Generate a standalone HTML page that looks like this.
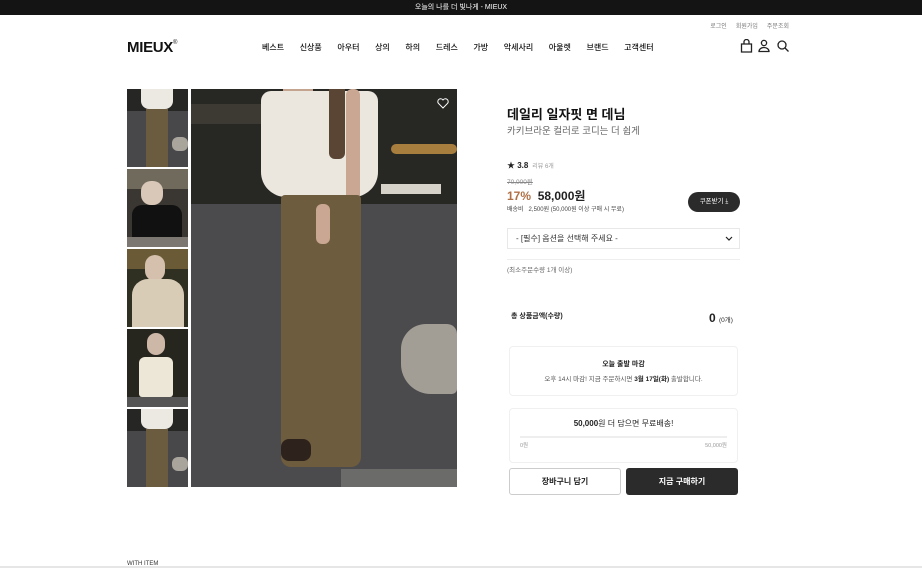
<!DOCTYPE html>
<html><head><meta charset="utf-8"><style>
*{margin:0;padding:0;box-sizing:border-box}
body{width:922px;height:568px;overflow:hidden;background:#fff;font-family:"Liberation Sans","Noto Sans CJK KR",sans-serif;color:#222;position:relative}
.a{position:absolute}
.top{left:0;top:0;width:922px;height:15px;background:#141414;color:#fff;font-size:7px;text-align:center;line-height:15px}
.util{top:21px;right:133px;font-size:6px;color:#777;word-spacing:0}
.util span{margin-left:9px}
.logo{left:127px;top:39px;font-size:15px;font-weight:bold;letter-spacing:-.3px;color:#111}
.logo sup{font-size:6px;font-weight:normal;vertical-align:top;position:relative;top:1px}
.nav{top:42px;left:262px;font-size:8px;color:#111;white-space:nowrap;font-weight:500}
.nav span{margin-right:15.6px}
.th{left:127px;width:61px;height:78px;overflow:hidden}
.th div,.m div{position:absolute}
.m{left:191px;top:89px;width:266px;height:398px;overflow:hidden;background:#4b4b4e}
</style></head><body>
<div class="a top">오늘의 나를 더 빛나게 - MIEUX</div>
<div class="a util"><span>로그인</span><span>회원가입</span><span>주문조회</span></div>
<div class="a logo">MIEUX<sup>®</sup></div>
<div class="a nav"><span>베스트</span><span>신상품</span><span>아우터</span><span>상의</span><span>하의</span><span>드레스</span><span>가방</span><span>악세사리</span><span>아울렛</span><span>브랜드</span><span>고객센터</span></div>
<svg class="a" style="left:740px;top:39px" width="52" height="14" viewBox="0 0 52 14" fill="none" stroke="#222" stroke-width="1.3"><path d="M1.5 5h10v8h-10z M4 5V3a2.5 2.5 0 0 1 5 0v2"/><circle cx="24" cy="4" r="2.6"/><path d="M19 12.5a5 4 0 0 1 10 0z"/><circle cx="42" cy="6" r="4"/><path d="M45 9l3.5 3.5"/></svg>

<div class="a th" style="top:89px;background:#48484b"><div style="left:0;top:0;width:61px;height:22px;background:#262624"></div><div style="left:14px;top:0;width:32px;height:20px;background:#ece9e2;border-radius:0 0 8px 8px"></div><div style="left:19px;top:20px;width:22px;height:58px;background:#6b5b3f"></div><div style="left:45px;top:48px;width:16px;height:14px;background:#a9a49c;border-radius:6px"></div></div>
<div class="a th" style="top:169px;background:#3a3631"><div style="left:0;top:0;width:61px;height:20px;background:#6f6a5c"></div><div style="left:14px;top:12px;width:22px;height:24px;background:#d9c7b8;border-radius:10px"></div><div style="left:5px;top:36px;width:50px;height:42px;background:#111;border-radius:10px 10px 0 0"></div><div style="left:0;top:68px;width:61px;height:10px;background:#7c7770"></div></div>
<div class="a th" style="top:249px;background:#2f2f22"><div style="left:0;top:0;width:61px;height:20px;background:#6a5a36"></div><div style="left:18px;top:6px;width:20px;height:26px;background:#d5c0ae;border-radius:10px"></div><div style="left:5px;top:30px;width:52px;height:48px;background:#d9ccb6;border-radius:16px 16px 0 0"></div></div>
<div class="a th" style="top:329px;background:#26261f"><div style="left:20px;top:4px;width:18px;height:22px;background:#cdb8a8;border-radius:9px"></div><div style="left:12px;top:28px;width:34px;height:40px;background:#ede7d8;border-radius:6px 6px 3px 3px"></div><div style="left:0;top:68px;width:61px;height:10px;background:#555"></div></div>
<div class="a th" style="top:409px;height:78px;background:#48484b"><div style="left:0;top:0;width:61px;height:22px;background:#262624"></div><div style="left:14px;top:0;width:32px;height:20px;background:#ece9e2;border-radius:0 0 8px 8px"></div><div style="left:19px;top:20px;width:22px;height:58px;background:#6b5b3f"></div><div style="left:45px;top:48px;width:16px;height:14px;background:#a9a49c;border-radius:6px"></div></div>

<div class="a m">
<div style="left:0;top:0;width:266px;height:115px;background:#272724"></div>
<div style="left:0;top:15px;width:90px;height:20px;background:#3d3a34"></div>
<div style="left:200px;top:55px;width:66px;height:10px;background:#a87e3f;border-radius:5px"></div>
<div style="left:190px;top:95px;width:60px;height:10px;background:#d6d2c9"></div>
<div style="left:210px;top:235px;width:56px;height:70px;background:#a39e95;border-radius:25px 10px 5px 30px"></div>
<div style="left:92px;top:0;width:30px;height:40px;background:#c4a48e"></div>
<div style="left:70px;top:2px;width:117px;height:106px;background:#ebe7df;border-radius:10px 10px 25px 25px"></div>
<div style="left:138px;top:0;width:16px;height:70px;background:#5a4534;border-radius:0 0 6px 6px"></div>
<div style="left:155px;top:0;width:14px;height:120px;background:#c9a792;border-radius:6px"></div>
<div style="left:90px;top:106px;width:80px;height:272px;background:#6e5c3e;border-radius:4px 4px 10px 10px"></div>
<div style="left:125px;top:115px;width:14px;height:40px;background:#c9a792;border-radius:6px"></div>
<div style="left:90px;top:350px;width:30px;height:22px;background:#2e231c;border-radius:8px"></div>
<div style="left:150px;top:380px;width:116px;height:18px;background:#6b6b6a"></div>
</div>
<svg class="a" style="left:437px;top:98px" width="12" height="11" viewBox="0 0 12 11" fill="none" stroke="#fff" stroke-width="1"><path d="M6 10L1.3 5.2A2.7 2.7 0 0 1 6 2a2.7 2.7 0 0 1 4.7 3.2z"/></svg>

<div class="a" style="left:507px;top:104px;font-size:13px;font-weight:bold;color:#111">데일리 일자핏 면 데님</div>
<div class="a" style="left:507px;top:123px;font-size:9.5px;color:#666">카키브라운 컬러로 코디는 더 쉽게</div>
<div class="a" style="left:507px;top:160px;font-size:8px;font-weight:bold">★ 3.8 <span style="font-weight:normal;font-size:6px;color:#999">&nbsp;리뷰 6개</span></div>
<div class="a" style="left:507px;top:176px;font-size:6.5px;color:#888;text-decoration:line-through">70,000원</div>
<div class="a" style="left:507px;top:187px;font-size:12px;font-weight:bold"><span style="color:#b07045">17%</span>&nbsp; 58,000원</div>
<div class="a" style="left:507px;top:204px;font-size:6px;color:#444">배송비 &nbsp; 2,500원 (50,000원 이상 구매 시 무료)</div>
<div class="a" style="left:688px;top:192px;width:52px;height:20px;border-radius:10px;background:#2b2b2b;color:#fff;font-size:6.5px;line-height:20px;text-align:center">쿠폰받기 ⤓</div>
<div class="a" style="left:507px;top:228px;width:233px;height:21px;border:1px solid #e8e8e8;font-size:8px;line-height:19px;padding-left:8px;color:#333">- [필수] 옵션을 선택해 주세요 -<svg style="position:absolute;right:6px;top:7px" width="8" height="5" viewBox="0 0 8 5" fill="none" stroke="#222" stroke-width="1.2"><path d="M1 1l3 3 3-3"/></svg></div>
<div class="a" style="left:507px;top:259px;width:233px;border-top:1px solid #eee"></div>
<div class="a" style="left:507px;top:264px;font-size:6.5px;color:#666">(최소주문수량 1개 이상)</div>
<div class="a" style="left:511px;top:311px;font-size:7px;font-weight:bold">총 상품금액(수량)</div>
<div class="a" style="left:709px;top:311px;font-size:12px;font-weight:bold">0 <span style="font-size:6.5px;font-weight:normal">(0개)</span></div>
<div class="a" style="left:509px;top:346px;width:229px;height:50px;border:1px solid #f0f0f0;border-radius:4px;text-align:center;font-size:7px"><div style="margin-top:12px;font-weight:bold">오늘 출발 마감</div><div style="margin-top:4px;font-size:6.5px;color:#555">오후 14시 마감! 지금 주문하시면 <b style="color:#222">3월 17일(화)</b> 출발합니다.</div></div>
<div class="a" style="left:509px;top:408px;width:229px;height:55px;border:1px solid #f0f0f0;border-radius:4px;font-size:8px;text-align:center"><div style="margin-top:9px"><b>50,000</b>원 더 담으면 무료배송!</div><div style="margin:7px 10px 0;height:2px;background:#eee"></div><div style="margin:3px 10px 0;font-size:5.5px;color:#999;display:flex;justify-content:space-between"><span>0원</span><span>50,000원</span></div></div>
<div class="a" style="left:509px;top:468px;width:112px;height:27px;border:1px solid #ccc;border-radius:3px;font-size:8px;font-weight:bold;line-height:25px;text-align:center">장바구니 담기</div>
<div class="a" style="left:626px;top:468px;width:112px;height:27px;background:#2b2b2b;border-radius:3px;color:#fff;font-size:8px;font-weight:bold;line-height:27px;text-align:center">지금 구매하기</div>
<div class="a" style="left:127px;top:561px;font-size:6px;color:#333">WITH ITEM</div>
<div class="a" style="left:0;top:566px;width:922px;height:2px;background:#e6e6e6"></div>
</body></html>
